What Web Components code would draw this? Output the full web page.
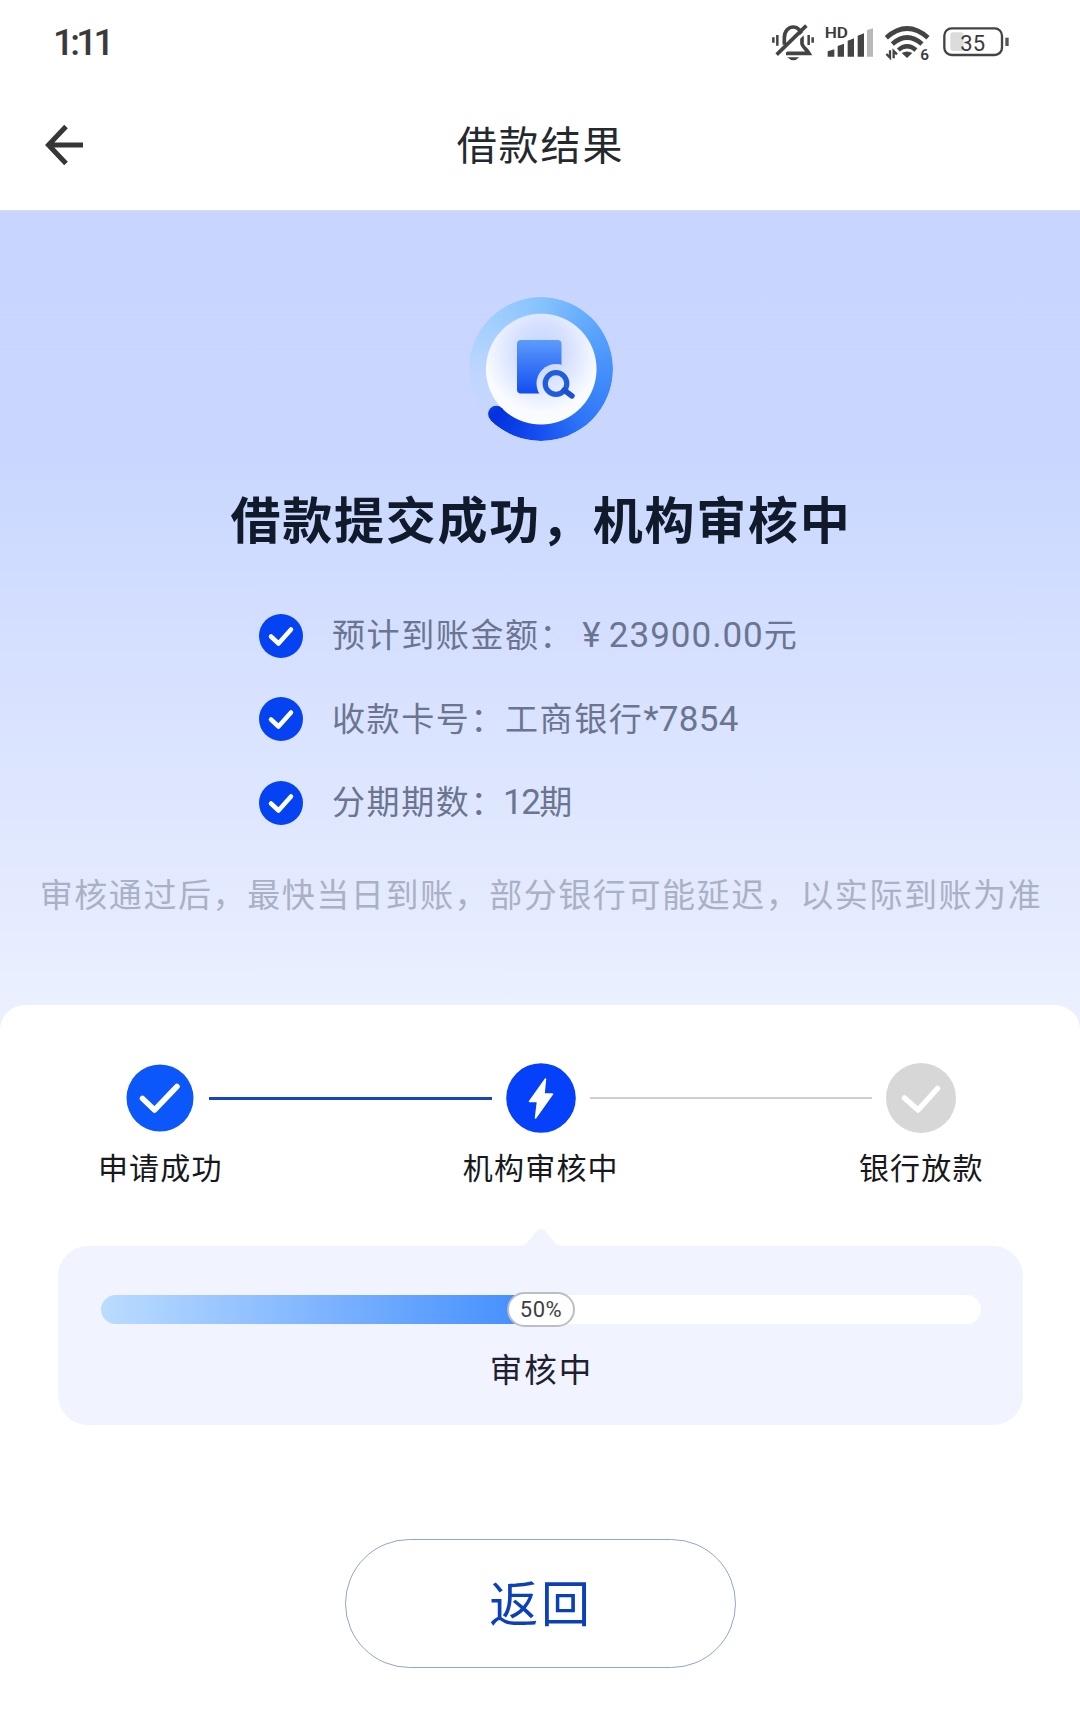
<!DOCTYPE html>
<html lang="zh-CN">
<head>
<meta charset="utf-8">
<title>借款结果</title>
<style>
html,body{margin:0;padding:0;background:#fff}
body{width:1080px;height:1728px;overflow:hidden;font-family:"Noto Sans CJK SC",sans-serif}
</style>
</head>
<body>
<loan-page></loan-page>
<script>
function define(name, html) {
  const t = document.createElement('template');
  t.innerHTML = html.trim();
  customElements.define(name, class extends HTMLElement {
    constructor() {
      super();
      this.attachShadow({ mode: 'open' }).appendChild(t.content.cloneNode(true));
    }
  });
}

define('status-bar', `
<style>
:host{display:flex;justify-content:space-between;height:84px;box-sizing:border-box;padding:10px 60px 0 53px;color:#3a3a3c}
.time{font:500 37px/66px Roboto,sans-serif;letter-spacing:-3.8px}
svg{display:block}
text{font-family:Roboto,sans-serif;fill:#3a3a3c}
</style>
<div class="time">1:11</div>
<svg width="260" height="65" viewBox="0 0 780 195" fill="none" stroke="#444" stroke-width="11">
  <g>
    <path d="M73 104V84C73 40 126 40 126 84V102C130 114 140 118 147 130H78"/>
    <path d="M58 141L147 55" stroke="#fff" stroke-width="8"/>
    <path d="M50 134L139 47"/>
    <path d="M82 142Q100 160 118 142Z" fill="#444" stroke="none"/>
    <path d="M40 82V98M52 75V107M146 75V105M158 82V98" stroke-width="7.500"/>
  </g>
  <g fill="#444" stroke="none">
    <text x="194" y="84" font-size="45" font-weight="600" textLength="70" lengthAdjust="spacingAndGlyphs">HD</text>
    <path d="M203 124l20-6v22h-20zM233 108l19-7v39h-19zM263 92l19-7v55h-19zM293 77l19-7v70h-19z"/>
    <path d="M321 60l18-5v85h-18z" fill="#b9b9b9"/>
  </g>
  <g>
    <path d="M379 83Q441 28 504 83" stroke-width="14"/>
    <path d="M397 102Q441 63 486 102" stroke-width="14"/>
    <path d="M415 120Q441 97 468 120" stroke-width="13"/>
    <path d="M425 129Q441 120 457 129L441 144Z" fill="#444" stroke="none"/>
    <path d="M390 121V143L379 132M401 145V123L411 133" stroke-width="7"/>
    <text x="481" y="149" font-size="46" font-weight="600" stroke="none">6</text>
  </g>
  <g>
    <rect x="571" y="67" width="40" height="56" rx="8" fill="#dcdcdc" stroke="none"/>
    <rect x="553" y="55" width="173" height="80" rx="22" stroke-width="7"/>
    <path d="M741 83V108" stroke-width="10" stroke="#555"/>
    <text x="638" y="122" text-anchor="middle" font-size="66" stroke="none">35</text>
  </g>
</svg>`);

define('title-bar', `
<style>
:host{display:grid;grid-template-columns:1fr auto 1fr;align-items:center;height:127px;box-sizing:border-box;padding:0 44px 5px;border-bottom:1px solid #d5dbe8}
svg{display:block}
h1{margin:-4px 0 0;font-size:40px;font-weight:400;line-height:60px;letter-spacing:1.9px;color:#24292e;padding-left:1px}
</style>
<svg width="42" height="44" viewBox="0 0 42 44" fill="none" stroke="#363636" stroke-width="5"><path d="M39 22H5M22 3.500L4.500 22L22 40.500"/></svg>
<h1><slot></slot></h1><span></span>`);

define('review-badge', `
<style>
:host{display:grid;place-items:center;width:144px;height:144px;margin-left:2px}
:host>*{grid-area:1/1}
.ring{width:144px;height:144px;border-radius:50%;
background:conic-gradient(from 224.5deg,#b5d9ff00 0deg,#b0d6ff55 40deg,#9cceffdd 88deg,#86c2fd 136deg,#5fa8fc 183deg,#4590fb 226deg,#2c75f7 279deg,#174ff2 316deg,#0231dd 360deg);
-webkit-mask:radial-gradient(circle,transparent 55px,#000 56px);mask:radial-gradient(circle,transparent 55px,#000 56px)}
.disc{width:111px;height:111px;border-radius:50%;background:radial-gradient(ellipse 52% 55% at 50% 34%,#c3d3ff 0,#d5e0ff 45%,#f9fbff 100%)}
svg{display:block}
</style>
<div class="ring"></div><div class="disc"></div>
<svg width="144" height="144" viewBox="0 0 144 144">
  <defs>
    <linearGradient id="d" x1="0" y1="0" x2="0" y2="1"><stop offset="0" stop-color="#5c9cfc"/><stop offset="1" stop-color="#124df0"/></linearGradient>
    <mask id="m"><rect width="144" height="144" fill="#fff"/><circle cx="87" cy="86.500" r="19.500" fill="#000"/></mask>
  </defs>
  <circle cx="27.300" cy="117" r="8.200" fill="#0231dd"/>
  <rect x="48" y="43" width="44.500" height="53.500" rx="4" fill="url(#d)" mask="url(#m)"/>
  <circle cx="87" cy="86.500" r="10.800" fill="none" stroke="#1f5ddd" stroke-width="5.200"/>
  <path d="M95 93L103 99" stroke="#1b51cf" stroke-width="5.400" stroke-linecap="round"/>
</svg>`);

define('fact-row', `
<style>
:host{display:flex;align-items:center;gap:29px;height:83.5px;font-size:33px;letter-spacing:1.6px;line-height:48px;color:#6b7590;white-space:nowrap}
svg{display:block;flex:none}
div{margin-top:-2px}
</style>
<svg width="44" height="44" viewBox="0 0 44 44"><circle cx="22" cy="22" r="22" fill="#0543f2"/><path d="M12 22.500L19.500 29.500L32 15.500" fill="none" stroke="#fff" stroke-width="4.500" stroke-linecap="round" stroke-linejoin="round"/></svg>
<div><slot></slot></div>`);

define('latin-run', `
<style>:host{font-family:Roboto,sans-serif;font-size:35px;letter-spacing:.3px}</style><slot></slot>`);

define('loan-hero', `
<style>
:host{display:flex;flex-direction:column;align-items:center;box-sizing:border-box;height:819px;padding-top:86px;background:linear-gradient(#c8d6ff 0,#c9d7ff 30%,#d3deff 49%,#dbe4ff 65%,#e3eaff 82%,#ebf0ff 97%)}
h2{margin:41px 0 0;font-size:50px;line-height:70px;font-weight:700;letter-spacing:1.75px;color:#111a2b;white-space:nowrap;padding-left:2px}
.facts{width:562px;margin-top:42px}
p{margin:24px 0 0;font-size:33px;line-height:48px;letter-spacing:1.57px;color:#aab1c6;white-space:nowrap;font-weight:400;padding-left:2px}
.yen{display:inline-block;width:34.6px;text-align:center;letter-spacing:0;font-family:Roboto,sans-serif;font-size:35px}
</style>
<review-badge></review-badge>
<h2>借款提交成功，机构审核中</h2>
<div class="facts">
  <fact-row>预计到账金额：<span class="yen">¥</span><latin-run style="letter-spacing:1px">23900.00</latin-run>元</fact-row>
  <fact-row>收款卡号：工商银行<latin-run>*7854</latin-run></fact-row>
  <fact-row>分期期数：<latin-run style="letter-spacing:-1.500px;margin-left:-2px">12</latin-run>期</fact-row>
</div>
<p>审核通过后，最快当日到账，部分银行可能延迟，以实际到账为准</p>`);

define('step-item', `
<style>
:host{display:flex;flex-direction:column;align-items:center;width:70px;white-space:nowrap}
.icon{display:grid;place-items:center;height:70px}
.label{font-size:30px;line-height:44px;letter-spacing:1.2px;color:#16181c;margin-top:11px;padding-left:.6px}
</style>
<div class="icon"><slot name="icon"></slot></div>
<div class="label"><slot></slot></div>`);

define('step-track', `
<style>
:host{display:flex;padding:58px 124px 0 125px}
.line{flex:1;margin:33.500px 14px 0;height:3px;background:#1546bd}
.line.off{height:2px;background:#cfcfcf;margin-top:34px}
svg{display:block}
</style>
<step-item><svg slot="icon" width="68" height="68" viewBox="0 0 68 68"><circle cx="34" cy="34" r="33.500" fill="#0b57fa"/><path d="M16.500 34.500L28.500 46L51 22.500" fill="none" stroke="#fff" stroke-width="5.500" stroke-linecap="round" stroke-linejoin="round"/></svg>申请成功</step-item>
<div class="line"></div>
<step-item><svg slot="icon" width="70" height="70" viewBox="0 0 70 70"><circle cx="35" cy="35" r="34.800" fill="#0541fa"/><path d="M39.500 16L23.500 38.500H31.500L29.500 55L46.500 31H38Z" fill="#fff" stroke="#fff" stroke-width="1.500" stroke-linejoin="round"/></svg>机构审核中</step-item>
<div class="line off"></div>
<step-item><svg slot="icon" width="70" height="70" viewBox="0 0 70 70"><circle cx="35" cy="35" r="35" fill="#d7d7d7"/><path d="M18.500 35L32 47L51.500 25.500" fill="none" stroke="#fff" stroke-width="5.500" stroke-linecap="round" stroke-linejoin="round"/></svg>银行放款</step-item>`);

define('progress-panel', `
<style>
:host{display:flex;flex-direction:column;align-items:center;margin:39.500px 57px 0 58px}
.tip{display:block}
.box{align-self:stretch;height:179px;border-radius:30px;background:#f1f4ff;box-sizing:border-box;padding:46px 42px 0 43px;display:flex;flex-direction:column;align-items:center}
.bar{align-self:stretch;display:grid;align-items:center;justify-items:start;height:35px}
.bar>*{grid-area:1/1}
.rail{width:100%;height:29px;border-radius:15px;background:#fff}
.fill{width:50%;height:29px;border-radius:15px 0 0 15px;background:linear-gradient(90deg,#bbdcff,#7eb4ff 50%,#3f8cff)}
.pill{justify-self:center;box-sizing:border-box;width:68px;height:35px;border:2px solid #bdbec2;border-radius:18px;background:#fff;text-align:center;font:400 22px/31px Roboto,sans-serif;letter-spacing:.5px;color:#3f3f42}
.state{font-size:32.500px;line-height:48px;letter-spacing:2px;margin-top:17px;color:#1d2030;padding-left:1px}
</style>
<svg class="tip" width="44" height="18" viewBox="0 0 44 18"><path d="M0 18Q5 18 8 15L18.500 2.500Q22 -1 25.500 2.500L36 15Q39 18 44 18Z" fill="#f1f4ff"/></svg>
<div class="box"><div class="bar"><div class="rail"></div><div class="fill"></div><div class="pill">50%</div></div><div class="state"><slot></slot></div></div>`);

define('back-button', `
<style>
:host{display:flex;justify-content:center;margin-top:114px}
.button{box-sizing:border-box;width:391px;height:129px;display:flex;align-items:center;justify-content:center;padding:0 0 5px 2px;border:1.5px solid #93a5cb;border-radius:65px;font-size:49px;line-height:72px;letter-spacing:2.800px;color:#0b40b8}
</style>
<div class="button" role="button" tabindex="0"><slot></slot></div>`);

define('loan-page', `
<style>
:host{display:flex;flex-direction:column;width:1080px;height:1728px;background:#fff}
.sheet{position:relative;z-index:1;margin-top:-25px;flex:1;border-radius:25px 25px 0 0;background:#fff}
</style>
<status-bar></status-bar>
<title-bar>借款结果</title-bar>
<loan-hero></loan-hero>
<section class="sheet">
  <step-track></step-track>
  <progress-panel>审核中</progress-panel>
  <back-button>返回</back-button>
</section>`);
</script>
</body>
</html>
